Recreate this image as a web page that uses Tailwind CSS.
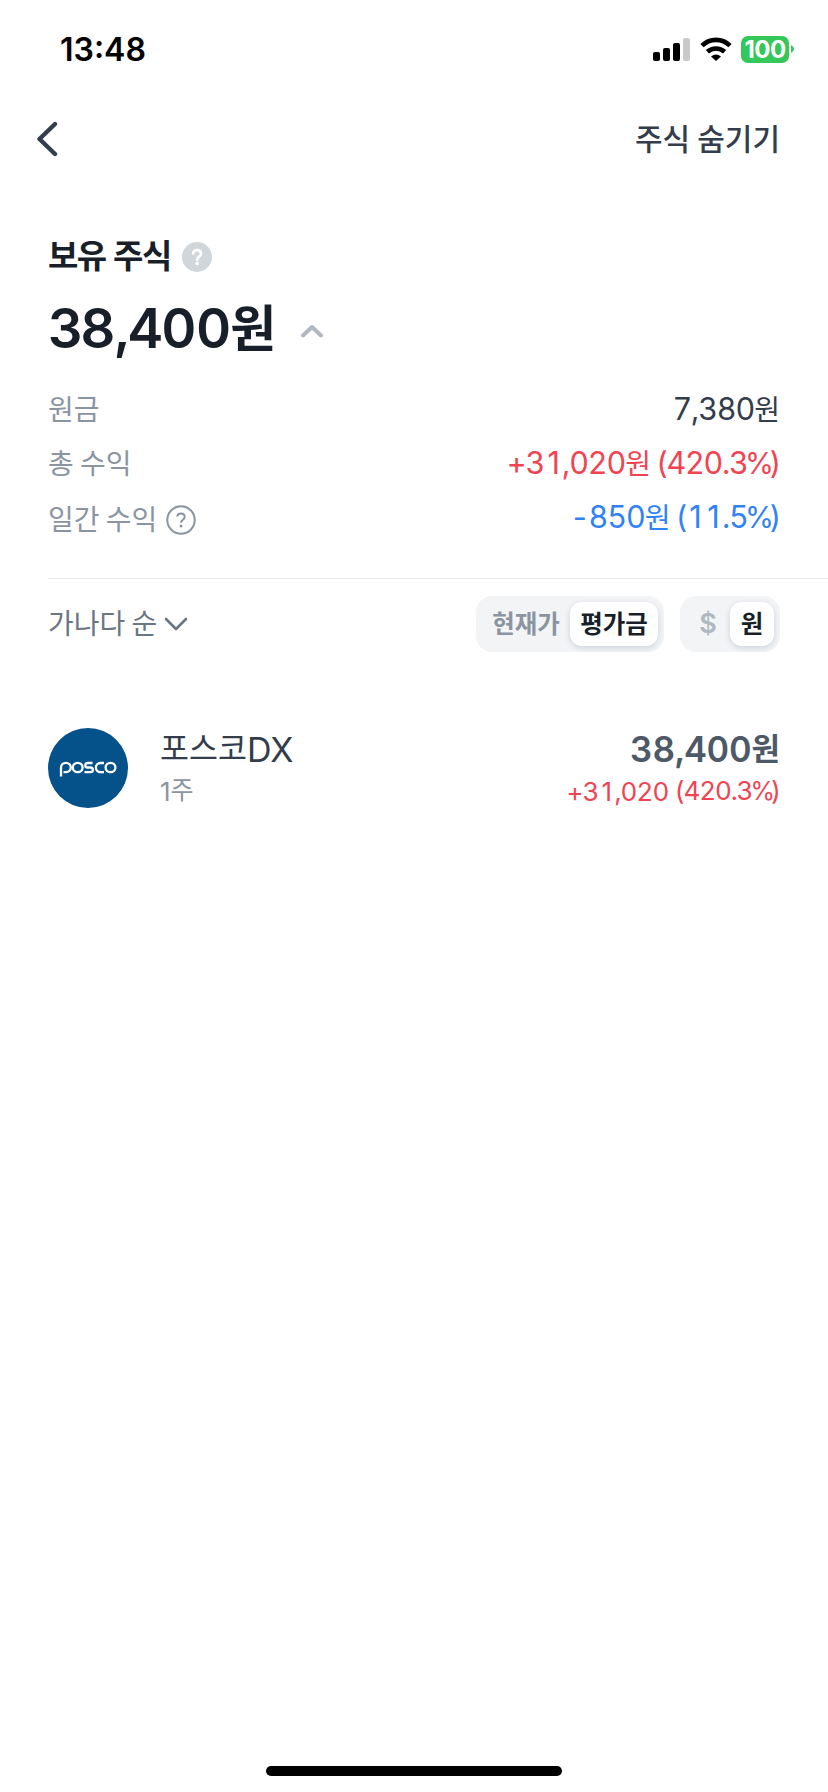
<!DOCTYPE html>
<html lang="ko">
<head>
<meta charset="utf-8">
<title>보유 주식</title>
<script src="https://cdn.jsdelivr.net/npm/@tailwindcss/browser@4"></script>
</head>
<body class="bg-white">
<div class="w-[828px] h-[1792px] flex flex-col overflow-hidden bg-white font-['Inter','Noto_Sans_CJK_KR',sans-serif] whitespace-nowrap tabular-nums">
  <!-- Status bar -->
  <header class="h-[98px] shrink-0 flex items-center justify-between pl-[60px] pr-[34px]">
    <span class="text-[32px] font-semibold text-black mt-[2px] proportional-nums">13:48</span>
    <div class="flex items-center">
      <svg class="w-[37px] h-[23px] mt-[1px]" viewBox="0 0 37 23"><rect x="0" y="14" width="7" height="9" rx="2"/><rect x="10" y="10" width="7" height="13" rx="2"/><rect x="20" y="5" width="7" height="18" rx="2"/><rect x="30" y="0" width="7" height="23" rx="2" fill="#cacaca"/></svg>
      <svg class="w-[32px] h-[24px] ml-[10px]" viewBox="0 0 32 24" fill="none" stroke="#000" stroke-width="4.6"><path d="M2 8.600C10 .9 22 .9 30 8.600"/><path d="M7.400 14.800C12.300 10.300 19.700 10.300 24.600 14.800"/><path d="M11 19.500Q16 15.600 21 19.500L16 24Z" fill="#000" stroke="none"/></svg>
      <div class="w-[48px] h-[27px] ml-[9px] rounded-[7px] bg-[#34c759] text-white text-[24px] leading-[27px] font-bold text-center tracking-[-0.5px] proportional-nums">100</div>
      <svg class="w-[3px] h-[8px] ml-[2px]" viewBox="0 0 3 8"><path d="M0 0Q3 1.500 3 4T0 8Z" fill="#34c759"/></svg>
    </div>
  </header>

  <!-- Navigation -->
  <nav class="h-[82px] shrink-0 flex items-center justify-between pl-[36px] pr-[48px]">
    <svg class="w-[22px] h-[36px]" viewBox="0 0 22 36" fill="none" stroke="#333d4b" stroke-width="4.400" stroke-linecap="round" stroke-linejoin="round"><path d="M19 3L3.500 18L19 33"/></svg>
    <span class="text-[30px] font-medium text-[#333d4b] [word-spacing:-1px]">주식 숨기기</span>
  </nav>

  <!-- Summary -->
  <section class="pl-[48px] pr-[48px] pt-[53px] shrink-0">
    <div class="h-[48px] flex items-center">
      <h1 class="text-[33px] font-bold text-[#191f28] tracking-[-1.5px]">보유 주식</h1>
      <svg class="w-[30px] h-[30px] ml-[11px]" viewBox="0 0 30 30"><circle cx="15" cy="15" r="15" fill="#d1d6db"/><path d="M11.200 11.500C11.400 6.800 19 7 19 11.600C19 14.600 15.200 14.600 15.200 17.800" fill="none" stroke="#fff" stroke-width="2.700" stroke-linecap="round"/><circle cx="15.200" cy="21.500" r="1.800" fill="#fff"/></svg>
    </div>
    <div class="h-[96px] flex items-center text-[#191f28]">
      <span class="text-[54.5px] font-semibold tracking-[-1.8px] -mt-[1px]"><span class="tracking-[-3px]">3</span><span class="tracking-[-0.700px]">8</span>,4<span class="tracking-[-0.500px]">0</span>0</span><span class="text-[50px] font-bold ml-[1px]">원</span>
      <svg class="w-[24px] h-[14px] ml-[24px] mt-[3px]" viewBox="0 0 24 14" fill="none" stroke="#b0b8c1" stroke-width="4" stroke-linecap="round" stroke-linejoin="round"><path d="M3 11.500L12 3L21 11.500"/></svg>
    </div>
    <dl class="text-[28px] [word-spacing:-1.300px]">
      <div class="h-[54px] mt-[6px] flex items-center justify-between">
        <dt class="text-[#8b95a1]">원금</dt>
        <dd class="text-[#333d4b] flex items-center"><span class="text-[30.5px] tracking-[-1.100px] pb-[2px]">7,380</span>원</dd>
      </div>
      <div class="h-[54px] flex items-center justify-between">
        <dt class="text-[#8b95a1]">총 수익</dt>
        <dd class="text-[#f04452] flex items-center"><span class="text-[30.5px] tracking-[-1.100px] pb-[2px]">+3<span class="inline-block w-[18px] text-center proportional-nums">1</span>,020</span>원<span class="text-[30.5px] tracking-[-1.300px] pb-[2px] ml-[5px]">(420.3<span class="text-[29.5px] -ml-[2.500px] tracking-[-4.500px]">%</span>)</span></dd>
      </div>
      <div class="h-[56px] flex items-center justify-between">
        <dt class="text-[#8b95a1] flex items-center pt-[2px]">일간 수익<svg class="w-[30px] h-[30px] ml-[9px]" viewBox="0 0 30 30" fill="none" stroke="#8b95a1" stroke-width="2"><circle cx="15" cy="15" r="13.700"/><path d="M11.300 11.500C11.500 7.300 18.700 7.300 18.700 11.800C18.700 14.700 15 14.700 15 17.700"/><circle cx="15" cy="20.900" r="1.500" fill="#8b95a1" stroke="none"/></svg></dt>
        <dd class="text-[#3182f6] flex items-center pb-[3px]"><span class="text-[30.5px] tracking-[-1.100px] pb-[2px]">-850</span>원<span class="text-[30.5px] tracking-[-1.300px] pb-[2px] ml-[5px]">(<span class="inline-block w-[17.500px] text-center proportional-nums">1</span><span class="inline-block w-[18.500px] text-center proportional-nums">1</span>.5<span class="text-[29.5px] -ml-[2.500px] tracking-[-4.500px]">%</span>)</span></dd>
      </div>
    </dl>
  </section>
  <div class="ml-[48px] mt-[31px] h-px bg-[#e9ebee] shrink-0"></div>

  <!-- Sort and display options -->
  <section class="mt-[17px] h-[56px] shrink-0 flex items-center pl-[48px] pr-[48px]">
    <span class="text-[28px] text-[#6b7684] [word-spacing:-1.300px]">가나다 순</span>
    <svg class="w-[24px] h-[14px] ml-[7px]" viewBox="0 0 24 14" fill="none" stroke="#6b7684" stroke-width="2.600" stroke-linecap="round" stroke-linejoin="round"><path d="M2 2L12 12L22 2"/></svg>
    <div class="ml-auto w-[188px] h-[56px] rounded-[16px] bg-[#f2f4f6] flex items-center p-[6px] text-[24.5px]">
      <span class="w-[88px] text-center font-bold text-[#8b95a1]">현재가</span>
      <span class="w-[88px] h-[44px] leading-[44px] rounded-[12px] bg-white shadow-[0_2px_6px_rgba(0,27,55,0.15)] text-center font-bold text-[#191f28]">평가금</span>
    </div>
    <div class="ml-[16px] w-[100px] h-[56px] rounded-[16px] bg-[#f2f4f6] flex items-center p-[6px] text-[24.5px]">
      <span class="w-[44px] text-center text-[27px] font-semibold text-[#b0b8c1]">$</span>
      <span class="w-[44px] h-[44px] leading-[44px] rounded-[12px] bg-white shadow-[0_2px_6px_rgba(0,27,55,0.15)] text-center font-bold text-[#191f28]">원</span>
    </div>
  </section>

  <!-- Holding -->
  <section class="mt-[76px] h-[80px] shrink-0 flex items-center pl-[48px] pr-[48px]">
    <svg class="w-[80px] h-[80px]" viewBox="0 0 80 80" fill="none" stroke="#fff" stroke-width="2.300"><circle cx="40" cy="40" r="40" fill="#05528b" stroke="none"/><path d="M13 48.500V39.500A4.900 4.700 0 1 1 18 44.200H15.500"/><ellipse cx="29.700" cy="39.500" rx="4.900" ry="4.700"/><path d="M44.500 35H39.500A2.200 2.200 0 0 0 39.500 39.500H42.500A2.300 2.300 0 0 1 42.500 44.200H36.500"/><path d="M56 35H52.500A4.600 4.600 0 0 0 52.500 44.200H56"/><ellipse cx="62.500" cy="39.500" rx="4.900" ry="4.700"/></svg>
    <div class="ml-[32px] pt-[2px]">
      <div class="h-[44px] flex items-center text-[#333d4b]"><span class="text-[31.500px]">포스코</span><span class="text-[34px]">DX</span></div>
      <div class="h-[40px] flex items-center text-[#8b95a1] proportional-nums"><span class="text-[26px]">1</span><span class="text-[25px]">주</span></div>
    </div>
    <div class="ml-auto flex flex-col items-end pt-[2px]">
      <div class="h-[44px] flex items-center text-[#4e5968]"><span class="text-[35px] font-semibold tracking-[-0.200px]">38,400</span><span class="text-[31px] font-bold">원</span></div>
      <div class="h-[40px] flex items-center text-[26px] text-[#f04452] tracking-[-0.900px]"><span>+3<span class="inline-block w-[16px] text-center proportional-nums">1</span>,020</span><span class="ml-[6px] tracking-[-1.100px]">(420.3<span class="text-[25px] -ml-[2px] tracking-[-4px]">%</span>)</span></div>
    </div>
  </section>

  <!-- Home indicator -->
  <div class="mt-auto mb-[16px] self-center w-[296px] h-[10px] rounded-full bg-black shrink-0"></div>
</div>
</body>
</html>
